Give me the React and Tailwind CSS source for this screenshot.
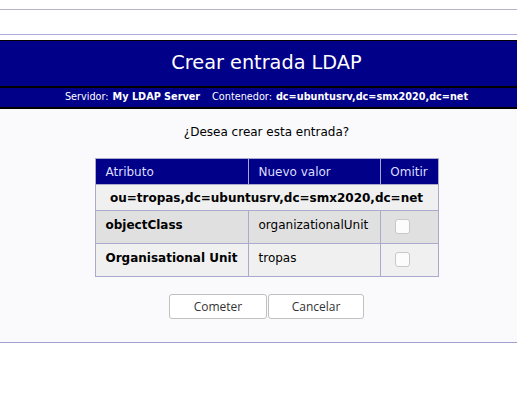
import React from "react";

export default function App() {
  const rows = [
    { attr: "objectClass", value: "organizationalUnit", bg: "bg-[#e0e0e0]" },
    { attr: "Organisational Unit", value: "tropas", bg: "bg-[#f0f0f0]" },
  ];

  return (
    <div className="w-[517px] h-[410px] bg-white font-['DejaVu_Sans',sans-serif] text-black">
      {/* barra superior */}
      <div className="h-[9px]" />
      <div className="border-t border-[#b4b4c8] h-[25px]" />
      <div className="border-t border-[#aaaadd] h-[6px]" />

      {/* cabecera */}
      <div className="bg-[#000088] border-t border-black h-[46px] pl-[16px] flex items-center justify-center">
        <h1 className="text-[19.3px] text-white">Crear entrada LDAP</h1>
      </div>
      <div className="bg-[#000088] border-y-2 border-black h-[23px] pl-[16px] flex items-center justify-center text-[9.7px] text-white">
        <span>Servidor: </span>
        <b className="ml-1">My LDAP Server</b>
        <span className="ml-3">Contenedor: </span>
        <b className="ml-1">dc=ubuntusrv,dc=smx2020,dc=net</b>
      </div>

      {/* cuerpo */}
      <div className="bg-[#fafafc] border-b border-[#a0a0d0] h-[234px] pl-[16px] flex flex-col items-center">
        <p className="mt-[14px] text-[12px] h-[18px] leading-[18px]">¿Desea crear esta entrada?</p>

        <table className="mt-[17px] w-[344px] table-fixed border-collapse border border-[#aaaacc] text-[12px]">
          <thead>
            <tr className="bg-[#000088] text-[#ddddff] h-[26px]">
              <th className="w-[153px] border border-[#aaaacc] px-[10px] text-left font-normal">Atributo</th>
              <th className="w-[132px] border border-[#aaaacc] px-[10px] text-left font-normal">Nuevo valor</th>
              <th className="border border-[#aaaacc] px-[4px] text-center font-normal">Omitir</th>
            </tr>
          </thead>
          <tbody>
            <tr className="bg-[#f0f0f0] h-[26px]">
              <td colSpan={3} className="border border-[#aaaacc] text-center font-bold whitespace-nowrap">
                ou=tropas,dc=ubuntusrv,dc=smx2020,dc=net
              </td>
            </tr>
            {rows.map((r) => (
              <tr key={r.attr} className={`${r.bg} h-[33px]`}>
                <td className="border border-[#aaaacc] px-[10px] pt-[5px] align-top font-bold whitespace-nowrap">{r.attr}</td>
                <td className="border border-[#aaaacc] px-[10px] pt-[5px] align-top">{r.value}</td>
                <td className="border border-[#aaaacc] align-top pt-[8px] pl-[14px]">
                  <div className="w-[15px] h-[15px] rounded-[3px] border border-[#c8c8c8] bg-[#fcfcfc]" />
                </td>
              </tr>
            ))}
          </tbody>
        </table>

        <div className="mt-[17px] flex gap-[1px]">
          <button className="w-[98px] h-[25px] rounded-[3px] border border-[#c0c0c0] bg-white text-[12px] text-[#333] font-['Open_Sans',sans-serif]">
            Cometer
          </button>
          <button className="w-[96px] h-[25px] rounded-[3px] border border-[#c0c0c0] bg-white text-[12px] text-[#333] font-['Open_Sans',sans-serif]">
            Cancelar
          </button>
        </div>
      </div>
    </div>
  );
}
